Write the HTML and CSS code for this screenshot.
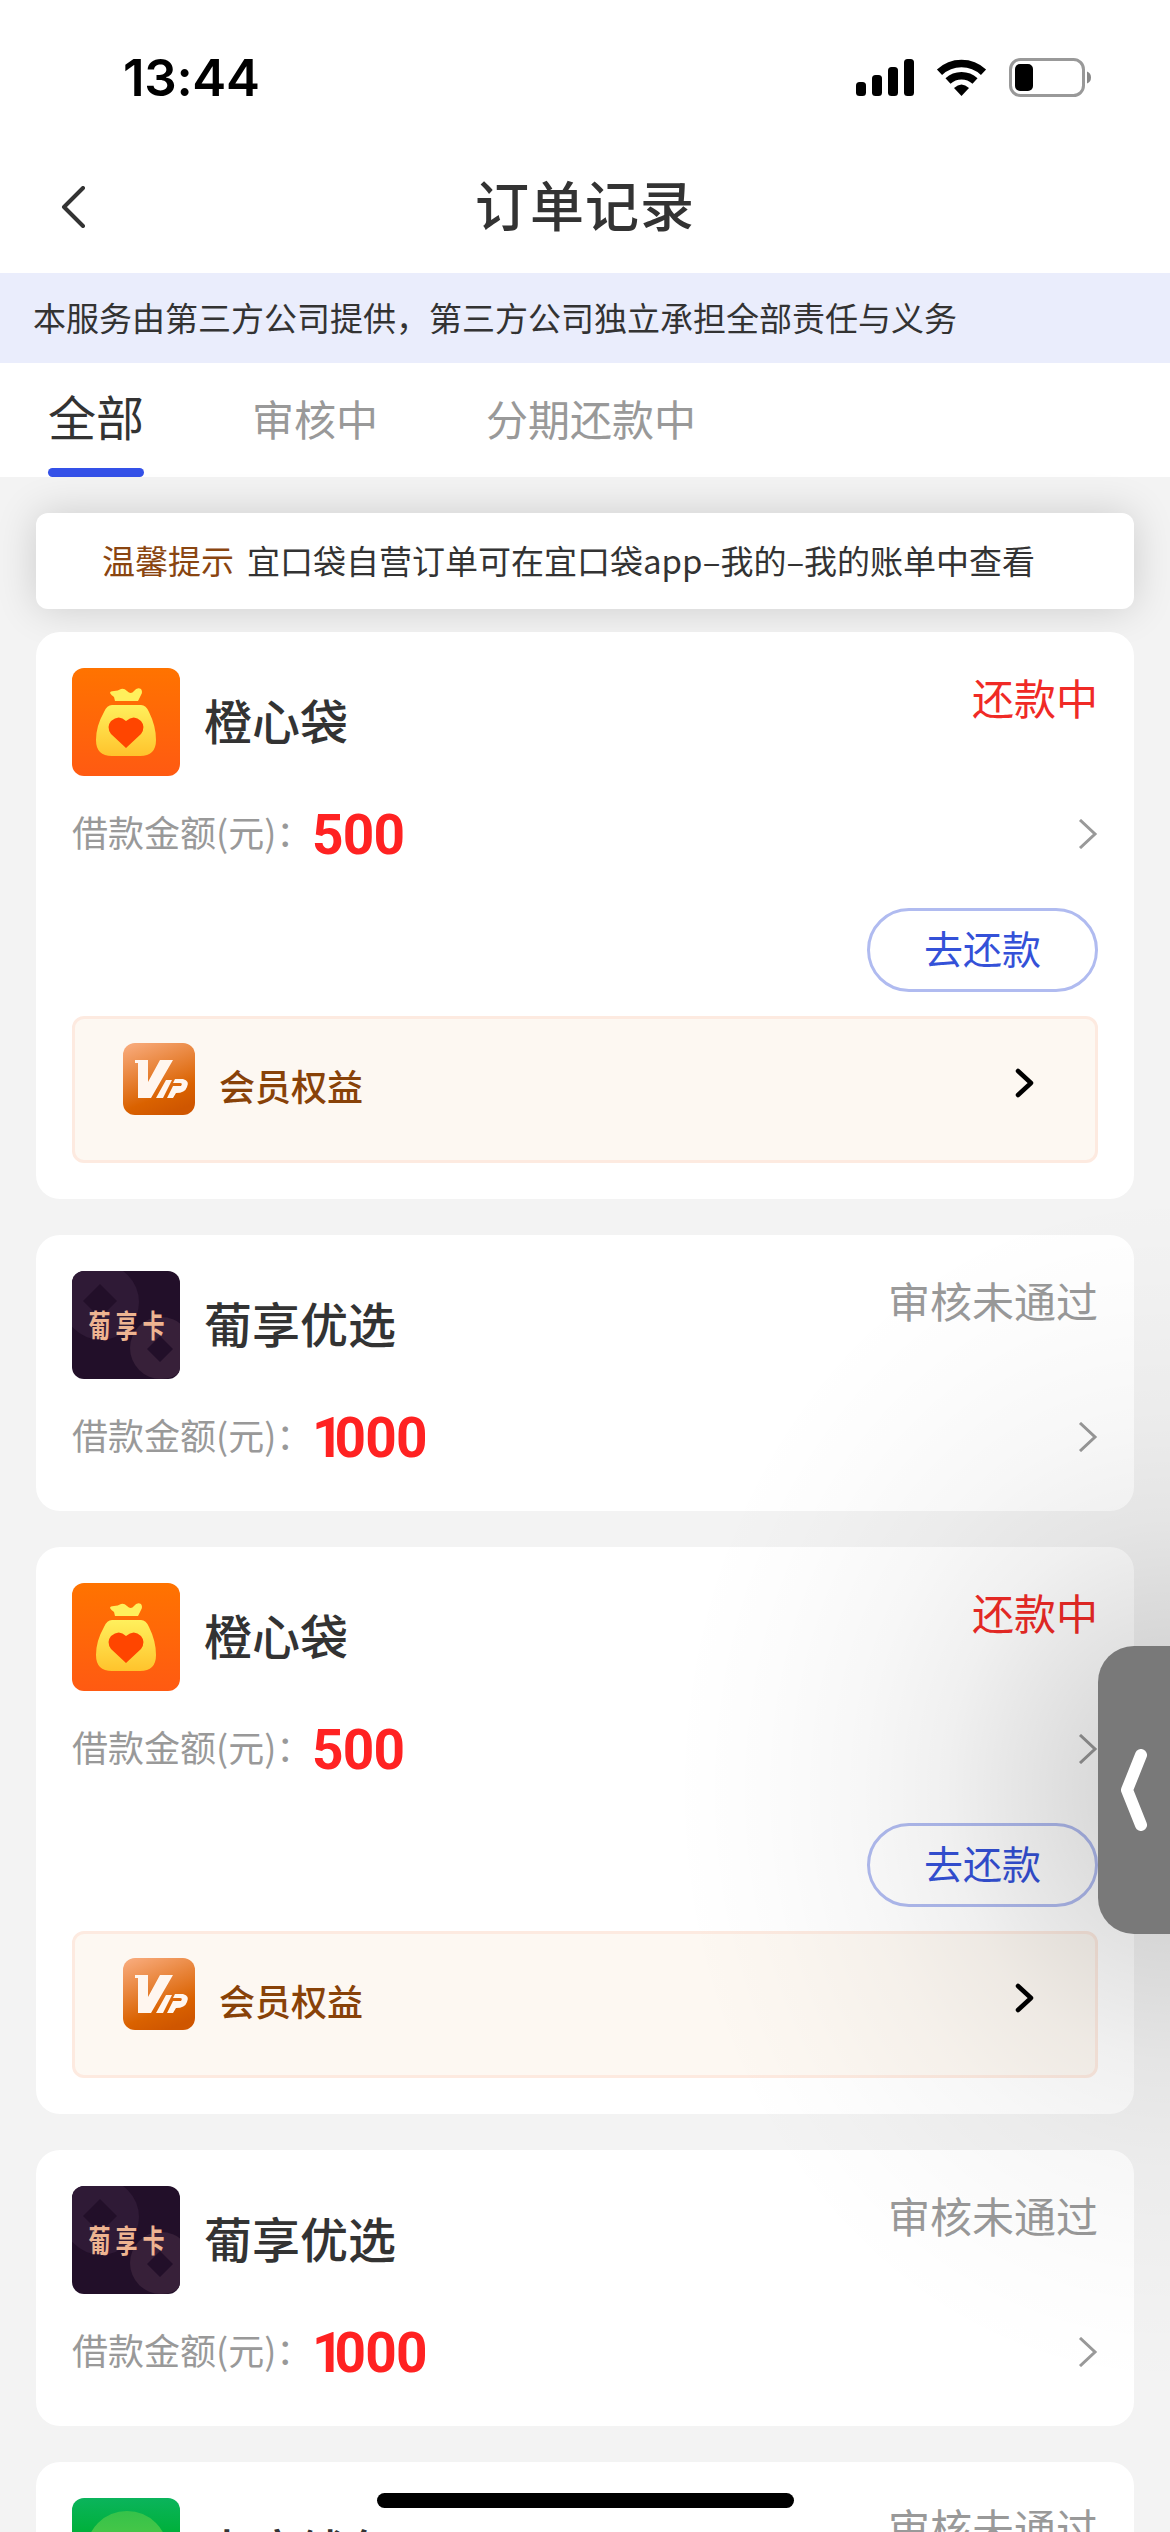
FILE: index.html
```
<!DOCTYPE html>
<html lang="zh-CN">
<head>
<meta charset="utf-8">
<title>订单记录</title>
<link rel="stylesheet" href="styles.css">
</head>
<body>
<svg class="defs" width="0" height="0" aria-hidden="true">
  <defs>
    <linearGradient id="orange" x1="0" y1="0" x2="0" y2="1"><stop offset="0" stop-color="#ff7300"/><stop offset="1" stop-color="#ff5a12"/></linearGradient>
    <linearGradient id="gold" x1="0" y1="0" x2="0" y2="1"><stop offset="0" stop-color="#fff05c"/><stop offset="1" stop-color="#ffc32c"/></linearGradient>
    <linearGradient id="copper" x1="0.2" y1="0" x2="0.6" y2="1"><stop offset="0" stop-color="#f7a877"/><stop offset="0.75" stop-color="#da6200"/><stop offset="1" stop-color="#cf5600"/></linearGradient>
    <linearGradient id="green" x1="0" y1="0" x2="0" y2="1"><stop offset="0" stop-color="#0bb45c"/><stop offset="0.3" stop-color="#00b03c"/></linearGradient>
    <linearGradient id="lime" x1="0" y1="0" x2="0" y2="1"><stop offset="0" stop-color="#36c24a"/><stop offset="1" stop-color="#6fd040"/></linearGradient>
    <symbol id="bag" viewBox="0 0 108 108">
      <rect width="108" height="108" fill="url(#orange)"/>
      <path d="M38 25q0-2 4-2 4 0 7-2 3-1 6 2 4 4 7 0 3-4 7-2 2 3 0 6l-3 6H43l-1-4q-3-2-4-4z" fill="#fff05c"/>
      <path d="M40 37h29q5 0 8 7 7 14 7 28 0 16-16 16H40Q24 88 24 72q0-14 8-28 3-7 8-7z" fill="url(#gold)"/>
      <path d="M54 80 39 66q-5-7 0-13 8-7 15 0 8-7 15 0 5 6 0 13z" fill="#ff4500"/>
    </symbol>
    <symbol id="grape" viewBox="0 0 108 108">
      <rect width="108" height="108" fill="#220f29"/>
      <circle cx="29" cy="31" r="38" fill="#2f1a36"/>
      <circle cx="89" cy="77" r="31" fill="#372039"/>
      <path d="m28 13 17 17-17 17-17-17zM88 65l13 13-13 13-13-13z" fill="#220f29"/>
    </symbol>
    <symbol id="vip" viewBox="0 0 72 72">
      <rect width="72" height="72" fill="url(#copper)"/>
      <path d="M12 17h13v22l12-22h13L28 55H15V20h-3zM43 37h6L40 55h-7zM52 36h8q7 2 4 8-2 6-11 6l-3 5h-6l6-12h8q2-3-1-3h-7z" fill="#fff6ef"/>
    </symbol>
    <symbol id="next" viewBox="0 0 20 30"><path d="m2 1 15 14L2 29" fill="none" stroke="#999" stroke-width="3"/></symbol>
    <symbol id="more" viewBox="0 0 20 30"><path d="m3 3 13 12L3 27" fill="none" stroke="#000" stroke-width="4.5" stroke-linecap="round" stroke-linejoin="round"/></symbol>
  </defs>
</svg>

<div class="screen">
  <header class="status-bar">
    <span class="time">13:44</span>
    <svg class="status-icons" width="236" height="40" viewBox="0 0 236 40">
      <g><rect x="0" y="24" width="10" height="14" rx="3.5"/><rect x="16" y="17" width="10" height="21" rx="3.5"/><rect x="32" y="9" width="10" height="29" rx="3.5"/><rect x="48" y="1" width="10" height="37" rx="3.5"/></g>
      <g fill="none" stroke="#000" stroke-width="7.500"><path d="M83.500 14.300a32 32 0 0 1 44 0"/><path d="M92 23a20 20 0 0 1 27 0"/></g>
      <path d="m105.500 38-7.500-8q7.500-7 15 0z"/>
      <rect x="154.500" y="1.500" width="73" height="36" rx="10" fill="none" stroke="#999" stroke-width="3"/>
      <rect x="159" y="6" width="18" height="27" rx="5"/>
      <path d="M231 13.500q4 1.500 4 6t-4 6z" fill="#888"/>
    </svg>
  </header>

  <nav class="title-bar">
    <svg class="back" width="26" height="42" viewBox="0 0 26 42"><path d="M23 2 4 21l19 19" fill="none" stroke="#333" stroke-width="4" stroke-linecap="round" stroke-linejoin="round"/></svg>
    <h1 class="title">订单记录</h1>
  </nav>

  <p class="notice">本服务由第三方公司提供，第三方公司独立承担全部责任与义务</p>

  <div class="tabs">
    <span class="tab tab-active">全部</span>
    <span class="tab">审核中</span>
    <span class="tab">分期还款中</span>
  </div>

  <main class="content">
    <div class="tip"><span class="tip-label">温馨提示</span><span class="tip-text">宜口袋自营订单可在宜口袋app–我的–我的账单中查看</span></div>

    <section class="card">
      <div class="card-head"><svg class="logo"><use href="#bag"/></svg><h2 class="name">橙心袋</h2><span class="state state-due">还款中</span></div>
      <div class="amount-row"><span class="label">借款金额(元)：</span><b class="amount">500</b><svg class="arrow"><use href="#next"/></svg></div>
      <div class="actions"><span class="pay">去还款</span></div>
      <div class="vip"><svg class="vip-icon"><use href="#vip"/></svg><span class="vip-text">会员权益</span><svg class="arrow vip-arrow"><use href="#more"/></svg></div>
    </section>

    <section class="card">
      <div class="card-head"><div class="logo brand"><svg class="brand-bg"><use href="#grape"/></svg><span class="brand-text">葡享卡</span></div><h2 class="name">葡享优选</h2><span class="state">审核未通过</span></div>
      <div class="amount-row"><span class="label">借款金额(元)：</span><b class="amount"><span class="one">1</span>000</b><svg class="arrow"><use href="#next"/></svg></div>
    </section>

    <section class="card">
      <div class="card-head"><svg class="logo"><use href="#bag"/></svg><h2 class="name">橙心袋</h2><span class="state state-due">还款中</span></div>
      <div class="amount-row"><span class="label">借款金额(元)：</span><b class="amount">500</b><svg class="arrow"><use href="#next"/></svg></div>
      <div class="actions"><span class="pay">去还款</span></div>
      <div class="vip"><svg class="vip-icon"><use href="#vip"/></svg><span class="vip-text">会员权益</span><svg class="arrow vip-arrow"><use href="#more"/></svg></div>
    </section>

    <section class="card">
      <div class="card-head"><div class="logo brand"><svg class="brand-bg"><use href="#grape"/></svg><span class="brand-text">葡享卡</span></div><h2 class="name">葡享优选</h2><span class="state">审核未通过</span></div>
      <div class="amount-row"><span class="label">借款金额(元)：</span><b class="amount"><span class="one">1</span>000</b><svg class="arrow"><use href="#next"/></svg></div>
    </section>

    <section class="card">
      <div class="card-head"><svg class="logo" viewBox="0 0 108 108"><rect width="108" height="108" fill="url(#green)"/><circle cx="55" cy="54" r="41" fill="url(#lime)"/></svg><h2 class="name">卡应钱包</h2><span class="state">审核未通过</span></div>
    </section>
  </main>

  <div class="glow"></div>
  <div class="drawer"><svg width="26" height="82" viewBox="0 0 26 82"><path d="M20 6 6 41l14 35" fill="none" stroke="#fff" stroke-width="12" stroke-linecap="round" stroke-linejoin="round"/></svg></div>
  <div class="home-indicator"></div>
</div>
</body>
</html>
```

FILE: styles.css
```
* { box-sizing: border-box; }
body, h1, h2, p { margin: 0; }
body { background: #f3f3f3; font-family: "Noto Sans CJK SC", sans-serif; color: #333; }
.defs { position: absolute; }
.screen { position: relative; width: 1170px; height: 2532px; overflow: hidden; background: #f3f3f3; }

.status-bar { height: 141px; padding: 58px 78px 0 123px; display: flex; justify-content: space-between; align-items: flex-start; background: #fff; }
.time { font: 600 51px/40px Inter, sans-serif; color: #000; letter-spacing: -0.3px; }
.status-icons { display: block; }

.title-bar { height: 132px; padding: 0 60px; display: grid; grid-template-columns: 26px 1fr 26px; align-items: center; background: #fff; }
.title { padding-bottom: 6px; font-size: 54px; line-height: 80px; font-weight: 500; text-align: center; letter-spacing: 1px; }

.notice { height: 90px; padding-left: 33px; background: #eaedfc; font-size: 33px; line-height: 88px; }

.tabs { height: 114px; padding-left: 48px; display: flex; gap: 108px; background: #fff; }
.tab { height: 114px; font-size: 42px; line-height: 110px; color: #999; }
.tab-active { display: flex; flex-direction: column; font-size: 48px; line-height: 105px; color: #333; }
.tab-active::after { content: ""; height: 9px; border-radius: 4.5px; background: #3451e8; }

.content { padding: 36px 36px 0; display: flex; flex-direction: column; gap: 36px; }
.tip { height: 96px; margin-bottom: -13px; padding-left: 66px; display: flex; gap: 13px; border-radius: 12px; background: #fff; font-size: 33px; line-height: 94px; box-shadow: 0 0 42px rgba(0, 0, 0, .16); white-space: nowrap; }
.tip-label { color: #8a4510; }

.card { padding: 36px; border-radius: 24px; background: #fff; }
.card + .card { position: relative; }
.tip + .card { position: relative; }
.card-head { height: 108px; display: flex; align-items: center; }
.logo { width: 108px; height: 108px; border-radius: 12px; overflow: hidden; flex: none; }
.brand { display: grid; grid-template-columns: 108px; justify-items: center; align-items: center; }
.brand-bg { width: 108px; height: 108px; grid-area: 1 / 1; }
.brand-text { grid-area: 1 / 1; z-index: 1; margin: 0 -10px; padding: 0 0 2px 7px; font-size: 31px; line-height: 36px; font-weight: 700; letter-spacing: 7px; white-space: nowrap; transform: scaleX(.71); color: #eeb491; }
.name { margin-left: 24px; padding-bottom: 7px; font-size: 48px; line-height: 72px; font-weight: 500; }
.state { align-self: flex-start; margin-left: auto; font-size: 42px; line-height: 57px; color: #999; }
.state-due { color: #f02a26; }

.amount-row { height: 96px; display: flex; align-items: center; padding-top: 20px; }
.label { width: 240px; padding-bottom: 6px; font-size: 36px; line-height: 54px; color: #999; white-space: nowrap; }
.amount { padding-top: 2px; font: 700 55px/60px Roboto, sans-serif; letter-spacing: -0.8px; color: #ff2222; }
.one { letter-spacing: -9px; }
.arrow { width: 20px; height: 30px; margin-left: auto; }

.actions { display: flex; justify-content: flex-end; margin-top: 36px; }
.pay { width: 231px; height: 84px; border: 3px solid #b0bbf0; border-radius: 42px; text-align: center; font-size: 39px; line-height: 73px; color: #3451d8; }
.vip { height: 147px; margin-top: 24px; padding: 24px 60px 0 48px; display: flex; align-items: flex-start; border: 3px solid #fdeae0; border-radius: 12px; background: #fdf8f2; }
.vip-icon { width: 72px; height: 72px; border-radius: 12px; }
.vip-text { margin: 15px 0 0 24px; font-size: 36px; line-height: 54px; font-weight: 500; color: #884208; }
.vip-arrow { margin-top: 25px; }

.glow { position: absolute; right: 0; top: 1190px; width: 500px; height: 1200px; background: radial-gradient(ellipse 500px 600px at 100% 50%, rgba(0,0,0,.17) 0, rgba(0,0,0,.145) 15%, rgba(0,0,0,.108) 27%, rgba(0,0,0,.06) 45%, rgba(0,0,0,.03) 62%, rgba(0,0,0,.01) 82%, transparent 100%); }
.drawer { position: absolute; right: 0; top: 1646px; width: 72px; height: 288px; padding-left: 23px; display: flex; align-items: center; border-radius: 36px 0 0 36px; background: #797979; }
.home-indicator { position: absolute; left: 377px; top: 2493px; width: 417px; height: 15px; border-radius: 8px; background: #000; }
```
